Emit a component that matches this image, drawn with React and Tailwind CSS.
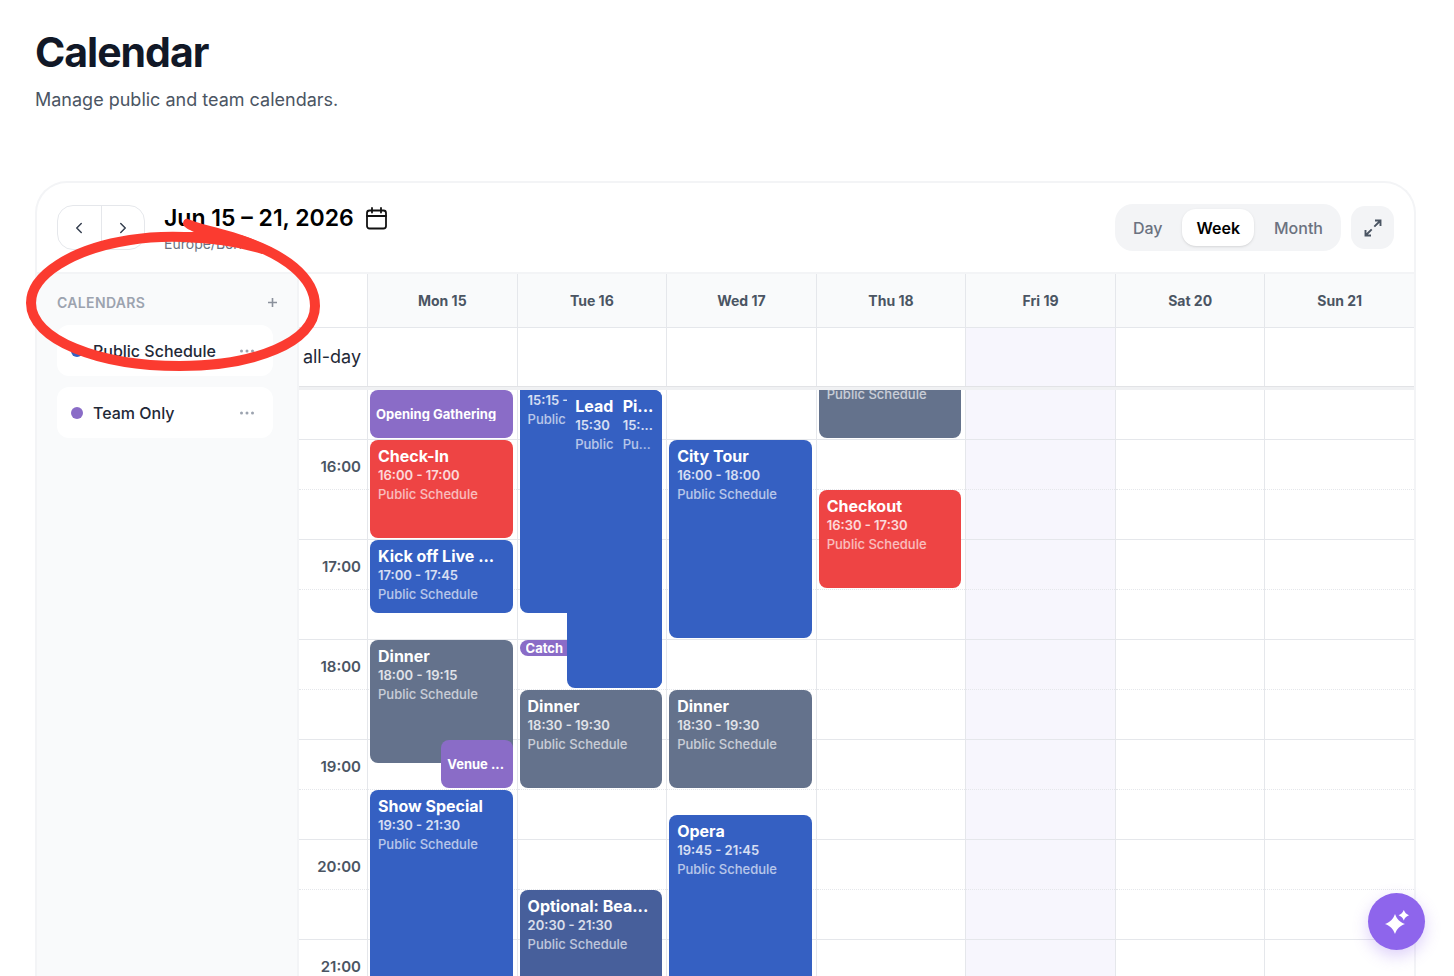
import React from "react";
import { ChevronLeft, ChevronRight } from "lucide-react";

const DAYS = ["Mon 15", "Tue 16", "Wed 17", "Thu 18", "Fri 19", "Sat 20", "Sun 21"];
const TODAY = "Fri 19";
const HOURS = ["16:00", "17:00", "18:00", "19:00", "20:00", "21:00"];
const FIRST_HOUR = 15.5;
const HOUR_HEIGHT = 100;

const TONES = {
  blue: "bg-[#3560c2]",
  red: "bg-[#ee4444]",
  slate: "bg-[#64728c]",
  violet: "bg-[#8a6cc7]",
  navy: "bg-[#475f9b]",
};

const EVENTS = {
  "Mon 15": [
    { title: "Opening Gathering", start: 15.5, end: 16, tone: "violet", compact: true },
    { title: "Check-In", time: "16:00 - 17:00", place: "Public Schedule", start: 16, end: 17, tone: "red" },
    { title: "Kick off Live ...", time: "17:00 - 17:45", place: "Public Schedule", start: 17, end: 17.75, tone: "blue" },
    { title: "Dinner", time: "18:00 - 19:15", place: "Public Schedule", start: 18, end: 19.25, tone: "slate" },
    { title: "Venue ...", start: 19, end: 19.5, tone: "violet", compact: true, from: 50 },
    { title: "Show Special", time: "19:30 - 21:30", place: "Public Schedule", start: 19.5, end: 21.5, tone: "blue" },
  ],
  "Tue 16": [
    { time: "15:15 -", place: "Public", start: 15.25, end: 17.75, tone: "blue", to: 66.6 },
    { title: "Catch", start: 18, end: 18.18, tone: "violet", compact: true, to: 50 },
    { title: "Lead", time: "15:30", place: "Public", start: 15.5, end: 18.5, tone: "blue", from: 33.4 },
    { title: "Pi...", time: "15:...", place: "Pu...", start: 15.5, end: 18.5, tone: "blue", from: 66.7 },
    { title: "Dinner", time: "18:30 - 19:30", place: "Public Schedule", start: 18.5, end: 19.5, tone: "slate" },
    { title: "Optional: Bea...", time: "20:30 - 21:30", place: "Public Schedule", start: 20.5, end: 21.5, tone: "navy" },
  ],
  "Wed 17": [
    { title: "City Tour", time: "16:00 - 18:00", place: "Public Schedule", start: 16, end: 18, tone: "blue" },
    { title: "Dinner", time: "18:30 - 19:30", place: "Public Schedule", start: 18.5, end: 19.5, tone: "slate" },
    { title: "Opera", time: "19:45 - 21:45", place: "Public Schedule", start: 19.75, end: 21.75, tone: "blue" },
  ],
  "Thu 18": [
    { place: "Public Schedule", start: 15, end: 16, tone: "slate" },
    { title: "Checkout", time: "16:30 - 17:30", place: "Public Schedule", start: 16.5, end: 17.5, tone: "red" },
  ],
};

function Event({ title, time, place, start, end, tone, compact, from = 0, to = 100 }) {
  const box = {
    top: (start - FIRST_HOUR) * HOUR_HEIGHT,
    height: (end - start) * HOUR_HEIGHT - 2,
    left: `${from}%`,
    width: `${to - from}%`,
  };
  if (compact) {
    return (
      <div style={box} className={`absolute flex items-center overflow-hidden rounded-lg px-1.5 ${TONES[tone]}`}>
        <span className="overflow-hidden whitespace-nowrap text-[13px] leading-[14px] font-bold text-white">{title}</span>
      </div>
    );
  }
  return (
    <div style={box} className={`absolute overflow-hidden rounded-lg px-2 pt-1.5 whitespace-nowrap ${TONES[tone]}`}>
      <div className="h-5 text-base leading-5 font-bold text-white">{title}</div>
      <div className="h-[19px] text-[13px] leading-[19px] font-semibold text-white/80">{time}</div>
      <div className="h-[19px] text-[13px] leading-[19px] font-medium text-white/65">{place}</div>
    </div>
  );
}

function Slots({ labels }) {
  return (
    <>
      <div className="h-[50px] border-b border-[#e5e7eb]" />
      {HOURS.map((h) => (
        <React.Fragment key={h}>
          <div className="flex h-[50px] items-center justify-end border-b border-dotted border-[#e5e7eb] pt-1.5 pr-1.5">
            {labels && <span className="text-[15px] font-semibold text-[#4b5563]">{h}</span>}
          </div>
          <div className="h-[50px] border-b border-[#e5e7eb]" />
        </React.Fragment>
      ))}
    </>
  );
}

function CalendarItem({ name, dot }) {
  return (
    <li className="flex h-[51px] items-center rounded-xl bg-white pr-4 pl-3.5">
      <span className={`mr-2.5 size-3 rounded-full ${dot}`} />
      <span className="flex-1 text-base font-medium text-[#1f2937]">{name}</span>
      <button type="button" aria-label={`${name} options`} className="flex h-6 w-5 items-center justify-center text-[#9ca3af]">
        <svg width="16" height="4" viewBox="0 0 16 4" fill="currentColor">
          <circle cx="2.5" cy="2" r="1.5" />
          <circle cx="8" cy="2" r="1.5" />
          <circle cx="13.5" cy="2" r="1.5" />
        </svg>
      </button>
    </li>
  );
}

const COLS = "grid grid-cols-[68px_repeat(7,minmax(0,1fr))]";

export default function App() {
  return (
    <div className="relative flex h-screen flex-col overflow-hidden bg-white font-[Inter,sans-serif]">
      <header className="px-[35px] pt-7 pb-[67px]">
        <h1 className="text-[41px] leading-[48px] font-bold tracking-tight text-[#111827]">Calendar</h1>
        <p className="mt-2.5 text-lg leading-7 text-[#4b5563]">Manage public and team calendars.</p>
      </header>

      <main className="mr-[38px] ml-[35px] flex min-h-0 flex-1 flex-col overflow-hidden rounded-t-[32px] border-2 border-b-0 border-[#f3f4f6]">
        <div className="flex h-[91px] shrink-0 items-center border-b-2 border-[#f3f4f6] pr-5 pl-5">
          <div className="flex h-[45px] w-[88px] divide-x divide-[#e5e7eb] overflow-hidden rounded-2xl border border-[#e5e7eb]">
            <button type="button" aria-label="Previous week" className="flex flex-1 items-center justify-center text-[#374151]">
              <ChevronLeft className="size-[18px]" />
            </button>
            <button type="button" aria-label="Next week" className="flex flex-1 items-center justify-center text-[#374151]">
              <ChevronRight className="size-[18px]" />
            </button>
          </div>
          <div className="ml-[19px] flex flex-col pt-[5px]">
            <div className="flex items-center gap-3">
              <h2 className="text-[23px] leading-7 font-semibold text-black">Jun 15 – 21, 2026</h2>
              <button type="button" aria-label="Pick a date">
                <svg width="21" height="23" viewBox="0 0 21 23" fill="none" stroke="#111" strokeWidth="1.8" strokeLinecap="round" strokeLinejoin="round">
                  <rect x="1" y="3.5" width="19" height="18" rx="2.5" />
                  <path d="M1 9h19M6 1v4.5M15 1v4.5" />
                </svg>
              </button>
            </div>
            <p className="text-sm leading-6 text-[#6b7280]">Europe/Berlin</p>
          </div>
          <div className="ml-auto flex items-center gap-2.5">
            <div className="flex h-[47px] items-center gap-1.5 rounded-[18px] bg-[#f3f4f6] px-1 py-[5px] text-base font-medium text-[#6b7280]">
              <button type="button" className="h-full px-3.5">Day</button>
              <button type="button" className="h-full rounded-[14px] bg-white px-3.5 font-semibold text-black shadow-sm">Week</button>
              <button type="button" className="h-full px-3.5">Month</button>
            </div>
            <button type="button" aria-label="Expand" className="flex size-[43px] items-center justify-center rounded-[14px] bg-[#f3f4f6]">
              <svg width="18" height="18" viewBox="0 0 18 18" fill="none" stroke="#4b5563" strokeWidth="1.9" strokeLinejoin="miter">
                <path d="M11 1.5h5.5V7M16.5 1.5l-6.200 6.200M7 16.5H1.500V11M1.500 16.500l6.200-6.200" />
              </svg>
            </button>
          </div>
        </div>

        <div className="flex min-h-0 flex-1">
          <aside className="w-[262px] shrink-0 border-r-2 border-[#f3f4f6] bg-[#f9fafb] pr-6 pl-5">
            <div className="flex h-[51px] items-center justify-between pt-1.5">
              <h3 className="text-sm font-semibold tracking-wide text-[#9ca3af]">CALENDARS</h3>
              <button type="button" aria-label="Add calendar" className="-mr-2.5 p-1.5">
                <svg width="9" height="9" viewBox="0 0 9 9" stroke="#8b919c" strokeWidth="1.6">
                  <path d="M4.500 0v9M0 4.500h9" />
                </svg>
              </button>
            </div>
            <ul className="flex flex-col gap-[11px]">
              <CalendarItem name="Public Schedule" dot="bg-[#3560c2]" />
              <CalendarItem name="Team Only" dot="bg-[#8a6cc7]" />
            </ul>
          </aside>

          <section className="flex min-w-0 flex-1 flex-col">
            <div className={`${COLS} h-[54px] shrink-0 border-b border-[#e5e7eb]`}>
              <div />
              {DAYS.map((d) => (
                <div key={d} className="flex items-center justify-center border-l border-[#e5e7eb] bg-[#f9fafb] text-sm font-bold text-[#4b5563]">
                  {d}
                </div>
              ))}
            </div>
            <div className={`${COLS} h-[58px] shrink-0`}>
              <div className="flex items-center justify-end pr-1.5 text-lg text-[#1f2937]">all-day</div>
              {DAYS.map((d) => (
                <div key={d} className={`border-l border-[#e5e7eb] ${d === TODAY ? "bg-[#f7f6fd]" : ""}`} />
              ))}
            </div>
            <div className="h-1 shrink-0 border-t border-[#e2e3e6] bg-[#f0f1f3]" />
            <div className={`${COLS} min-h-0 flex-1 overflow-hidden`}>
              <div>
                <Slots labels />
              </div>
              {DAYS.map((d) => (
                <div key={d} className={`relative border-l border-[#e5e7eb] ${d === TODAY ? "bg-[#f7f6fd]" : ""}`}>
                  <Slots />
                  <div className="absolute inset-y-0 right-1 left-0.5">
                    {(EVENTS[d] || []).map((e) => (
                      <Event key={e.start + "-" + e.end + (e.title || "")} {...e} />
                    ))}
                  </div>
                </div>
              ))}
            </div>
          </section>
        </div>
      </main>

      <svg className="pointer-events-none absolute top-[210px] left-[15px]" width="320" height="170" viewBox="15 210 320 170" fill="none">
        <path
          d="M222 240C190 236 160 235 130 240C72 249 31 275 31 303C31 340 99 366 180 366C255 366 315 342 315 306C315 277 284 254 240 240"
          stroke="#fb3b30"
          strokeWidth="10"
        />
        <path d="M188 219C205 226 228 229 250 238L272 248L262 254C238 247 215 243 184 242L184 232L194 232C190 230 183 227 183 224C183 221 185 218 188 219Z" fill="#fb3b30" />
      </svg>

      <button type="button" aria-label="Assistant" className="absolute right-[29px] bottom-[26px] flex size-[57px] items-center justify-center rounded-full bg-[#8e65ec] shadow-[0_6px_16px_rgba(142,101,236,0.3)]">
        <svg width="24" height="24" viewBox="0 0 24 24" fill="#fff">
          <path d="M10 4C12.300 9.700 14.300 11.700 20 14C14.300 16.300 12.300 18.300 10 24C7.700 18.300 5.700 16.300 0 14C5.700 11.700 7.700 9.700 10 4Z" />
          <path d="M18.800 0C20 2.900 21.100 4 24 5.200C21.100 6.400 20 7.500 18.800 10.400C17.600 7.500 16.500 6.400 13.600 5.200C16.500 4 17.600 2.900 18.800 0Z" />
        </svg>
      </button>
    </div>
  );
}
